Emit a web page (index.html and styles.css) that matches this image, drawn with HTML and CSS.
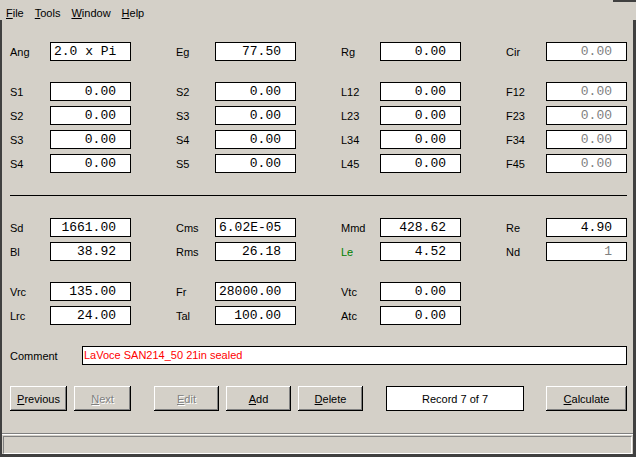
FILE: index.html
```html
<!DOCTYPE html>
<html>
<head>
<meta charset="utf-8">
<title>Driver</title>
<link rel="stylesheet" href="styles.css">
</head>
<body>
<div class="window">
  <nav class="menubar">
    <span class="menu"><u>F</u>ile</span>
    <span class="menu"><u>T</u>ools</span>
    <span class="menu"><u>W</u>indow</span>
    <span class="menu"><u>H</u>elp</span>
  </nav>
  <main class="client">
    <div class="form">
      <div class="grid">
        <div class="pair"><span class="lbl">Ang</span><span class="fld txt">2.0 x Pi</span></div>
        <div class="pair"><span class="lbl">Eg</span><span class="fld">77.50</span></div>
        <div class="pair"><span class="lbl">Rg</span><span class="fld">0.00</span></div>
        <div class="pair"><span class="lbl">Cir</span><span class="fld dim">0.00</span></div>
      </div>

      <div class="grid gap21">
        <div class="pair"><span class="lbl">S1</span><span class="fld">0.00</span></div>
        <div class="pair"><span class="lbl">S2</span><span class="fld">0.00</span></div>
        <div class="pair"><span class="lbl">L12</span><span class="fld">0.00</span></div>
        <div class="pair"><span class="lbl">F12</span><span class="fld dim">0.00</span></div>

        <div class="pair"><span class="lbl">S2</span><span class="fld">0.00</span></div>
        <div class="pair"><span class="lbl">S3</span><span class="fld">0.00</span></div>
        <div class="pair"><span class="lbl">L23</span><span class="fld">0.00</span></div>
        <div class="pair"><span class="lbl">F23</span><span class="fld dim">0.00</span></div>

        <div class="pair"><span class="lbl">S3</span><span class="fld">0.00</span></div>
        <div class="pair"><span class="lbl">S4</span><span class="fld">0.00</span></div>
        <div class="pair"><span class="lbl">L34</span><span class="fld">0.00</span></div>
        <div class="pair"><span class="lbl">F34</span><span class="fld dim">0.00</span></div>

        <div class="pair"><span class="lbl">S4</span><span class="fld">0.00</span></div>
        <div class="pair"><span class="lbl">S5</span><span class="fld">0.00</span></div>
        <div class="pair"><span class="lbl">L45</span><span class="fld">0.00</span></div>
        <div class="pair"><span class="lbl">F45</span><span class="fld dim">0.00</span></div>
      </div>

      <div class="rule"></div>

      <div class="grid gap22">
        <div class="pair"><span class="lbl">Sd</span><span class="fld">1661.00</span></div>
        <div class="pair"><span class="lbl">Cms</span><span class="fld txt">6.02E-05</span></div>
        <div class="pair"><span class="lbl">Mmd</span><span class="fld">428.62</span></div>
        <div class="pair"><span class="lbl">Re</span><span class="fld">4.90</span></div>

        <div class="pair"><span class="lbl">Bl</span><span class="fld">38.92</span></div>
        <div class="pair"><span class="lbl">Rms</span><span class="fld">26.18</span></div>
        <div class="pair"><span class="lbl green">Le</span><span class="fld">4.52</span></div>
        <div class="pair"><span class="lbl">Nd</span><span class="fld dim">1</span></div>
      </div>

      <div class="grid gap21">
        <div class="pair"><span class="lbl">Vrc</span><span class="fld">135.00</span></div>
        <div class="pair"><span class="lbl">Fr</span><span class="fld txt">28000.00</span></div>
        <div class="pair"><span class="lbl">Vtc</span><span class="fld">0.00</span></div>
        <div class="pair"></div>

        <div class="pair"><span class="lbl">Lrc</span><span class="fld">24.00</span></div>
        <div class="pair"><span class="lbl">Tal</span><span class="fld">100.00</span></div>
        <div class="pair"><span class="lbl">Atc</span><span class="fld">0.00</span></div>
        <div class="pair"></div>
      </div>

      <div class="comment-row">
        <span class="comment-lbl">Comment</span>
        <span class="comment-fld">LaVoce SAN214_50 21in sealed</span>
      </div>

      <div class="buttons">
        <button class="btn w57"><u>P</u>revious</button>
        <button class="btn w57 disabled"><u>N</u>ext</button>
        <button class="btn w65 disabled push"><u>E</u>dit</button>
        <button class="btn w65"><u>A</u>dd</button>
        <button class="btn w65"><u>D</u>elete</button>
        <div class="record push">Record 7 of 7</div>
        <button class="btn w81 push2"><u>C</u>alculate</button>
      </div>
    </div>

    <div class="status-sep"></div>
    <div class="statusbar"></div>
  </main>
</div>
</body>
</html>
```

FILE: styles.css
```css
* {
  box-sizing: border-box;
}

html,
body {
  margin: 0;
  padding: 0;
}

body {
  background: #d4d0c8;
  font-family: "Liberation Sans", Arial, sans-serif;
  font-size: 11px;
  color: #000;
  overflow: hidden;
}

.window {
  width: 636px;
  height: 457px;
  display: flex;
  flex-direction: column;
}

/* ---------- menu bar ---------- */
.menubar {
  position: relative;
  height: 20px;
  flex: 0 0 20px;
  display: flex;
  align-items: center;
  gap: 11px;
  padding: 5px 0 0 6px;
}

.menubar::after {
  content: "";
  position: absolute;
  top: 0;
  right: 0;
  width: 23px;
  height: 2px;
  background: #404040;
}

.menu u {
  text-decoration: underline;
}

/* ---------- client area ---------- */
.client {
  flex: 1;
  display: flex;
  flex-direction: column;
  border-left: 2px solid #404040;
  border-right: 3px solid #404040;
  border-bottom: 3px solid #404040;
}

.form {
  display: flex;
  flex-direction: column;
  padding: 22px 6px 0 8px;
}

.grid {
  display: grid;
  grid-template-columns: 121px 121px 121px 122px;
  grid-auto-rows: 19px;
  column-gap: 44px;
  row-gap: 5px;
}

.gap21 {
  margin-top: 21px;
}

.gap22 {
  margin-top: 22px;
}

.pair {
  display: flex;
  align-items: center;
  height: 19px;
}

.lbl {
  flex: 1;
  white-space: nowrap;
}

.grid .pair:not(:nth-child(4n+1)) .lbl {
  padding-left: 1px;
}

.green {
  color: #008000;
}

.fld {
  width: 81px;
  height: 19px;
  flex: 0 0 81px;
  border: 1px solid #000;
  background: #fff;
  font-family: "Liberation Mono", "Courier New", monospace;
  font-size: 13px;
  line-height: 17px;
  text-align: right;
  padding-right: 14px;
  white-space: pre;
  overflow: hidden;
}

.fld.txt {
  text-align: left;
  padding-left: 3px;
  padding-right: 0;
}

.fld.dim {
  color: #808080;
}

.rule {
  height: 1px;
  background: #000;
  margin-top: 22px;
}

/* ---------- comment ---------- */
.comment-row {
  display: flex;
  align-items: center;
  margin-top: 21px;
  height: 19px;
}

.comment-lbl {
  width: 72px;
  flex: 0 0 72px;
}

.comment-fld {
  flex: 1;
  height: 19px;
  border: 1px solid #000;
  background: #fff;
  color: #ff0000;
  line-height: 17px;
  padding-left: 1px;
  white-space: nowrap;
}

/* ---------- buttons ---------- */
.buttons {
  display: flex;
  gap: 7px;
  margin-top: 21px;
  height: 25px;
}

.btn {
  height: 25px;
  margin: 0;
  padding: 0;
  border: none;
  background: #d4d0c8;
  font-family: "Liberation Sans", Arial, sans-serif;
  font-size: 11px;
  color: #000;
  box-shadow: inset -1px -1px 0 #000, inset 1px 1px 0 #fff, inset -2px -2px 0 #808080;
  display: flex;
  align-items: center;
  justify-content: center;
}

.btn.disabled {
  color: #808080;
  text-shadow: 1px 1px 0 #fff;
}

.w57 {
  width: 57px;
}

.w65 {
  width: 65px;
}

.w81 {
  width: 81px;
}

.push {
  margin-left: 16px;
}

.push2 {
  margin-left: 15px;
}

.record {
  width: 138px;
  height: 25px;
  border: 1px solid #000;
  background: #fff;
  display: flex;
  align-items: center;
  justify-content: center;
}

/* ---------- status bar ---------- */
.status-sep {
  margin-top: 22px;
  height: 2px;
  border-top: 1px solid #808080;
  border-bottom: 1px solid #fff;
}

.statusbar {
  margin: 1px 1px 0 1px;
  height: 18px;
  border: 1px solid;
  border-color: #808080 #fff #fff #808080;
}
```
